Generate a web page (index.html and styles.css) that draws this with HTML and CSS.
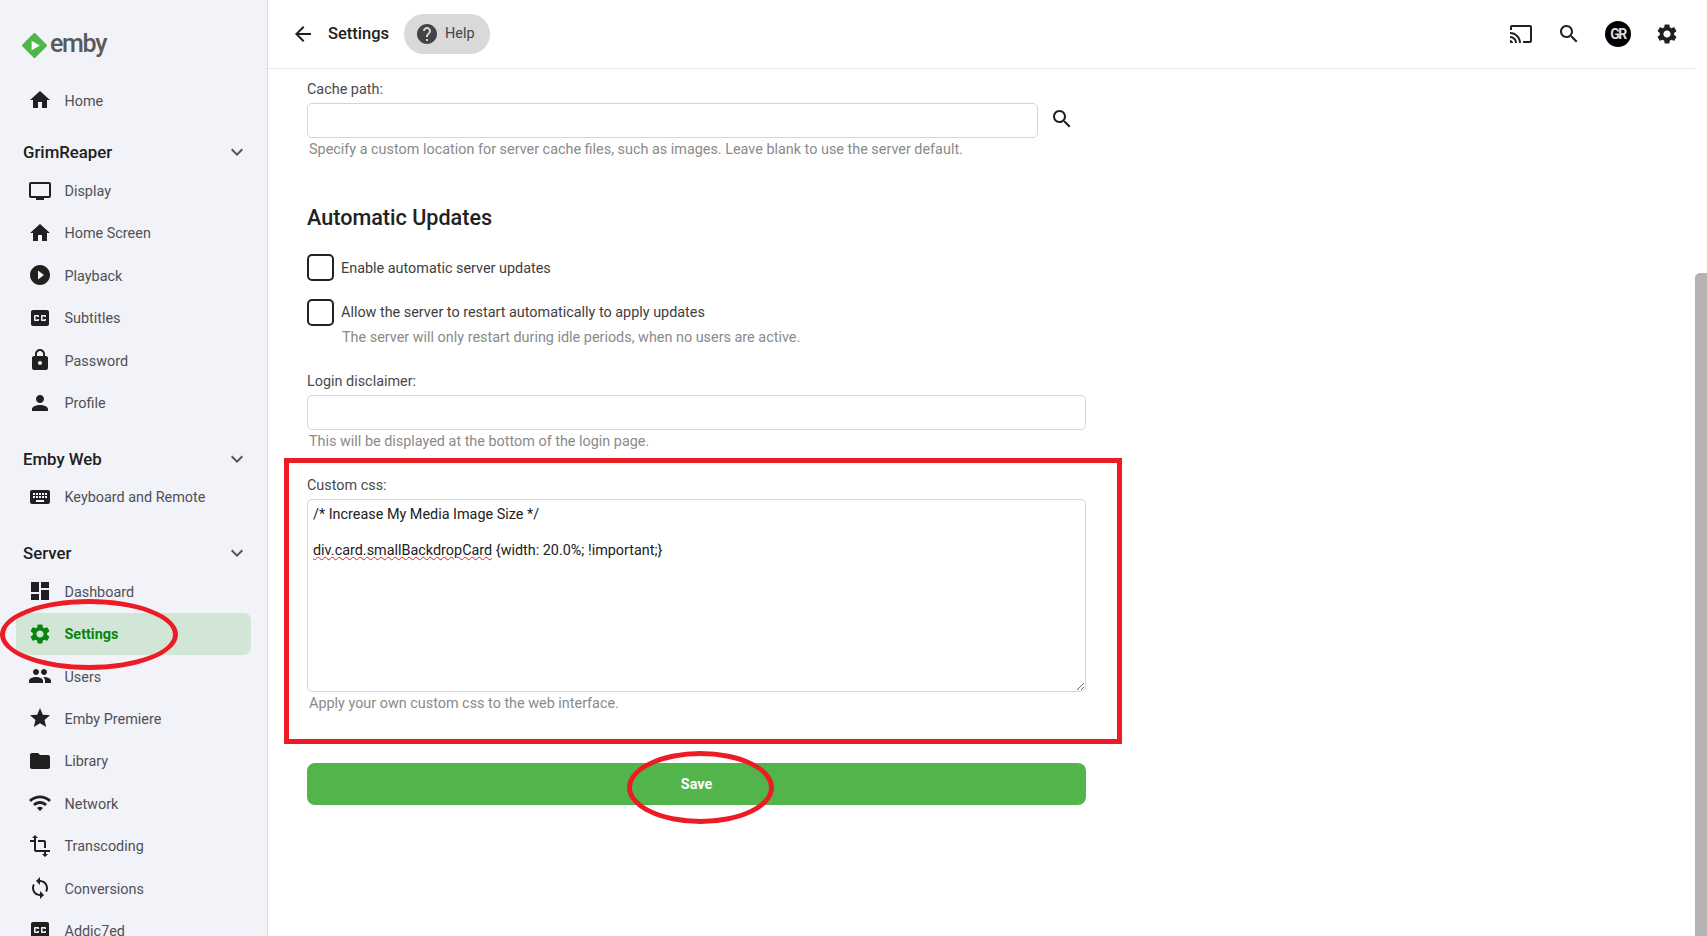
FILE: index.html
```html
<!DOCTYPE html>
<html lang="en">
<head>
<meta charset="utf-8">
<title>Settings</title>
<link rel="stylesheet" href="styles.css">
</head>
<body>
<svg class="sprite" aria-hidden="true">
<symbol id="i-home" viewBox="0 0 24 24"><path d="M10 20v-6h4v6h5v-8h3L12 3 2 12h3v8z"/></symbol>
<symbol id="i-tv" viewBox="0 0 24 24"><path d="M21 3H3c-1.1 0-2 .9-2 2v12c0 1.1.9 2 2 2h5v2h8v-2h5c1.1 0 1.99-.9 1.99-2L23 5c0-1.1-.9-2-2-2zm0 14H3V5h18v12z"/></symbol>
<symbol id="i-play" viewBox="0 0 24 24"><path d="M12 2C6.48 2 2 6.48 2 12s4.48 10 10 10 10-4.48 10-10S17.52 2 12 2zm-2 14.5v-9l6 4.5-6 4.5z"/></symbol>
<symbol id="i-cc" viewBox="0 0 24 24"><path d="M19 4H5c-1.11 0-2 .9-2 2v12c0 1.1.89 2 2 2h14c1.1 0 2-.9 2-2V6c0-1.1-.9-2-2-2zm-8 7H9.5v-.5h-2v3h2V13H11v1c0 .55-.45 1-1 1H7c-.55 0-1-.45-1-1v-4c0-.55.45-1 1-1h3c.55 0 1 .45 1 1v1zm7 0h-1.5v-.5h-2v3h2V13H18v1c0 .55-.45 1-1 1h-3c-.55 0-1-.45-1-1v-4c0-.55.45-1 1-1h3c.55 0 1 .45 1 1v1z"/></symbol>
<symbol id="i-lock" viewBox="0 0 24 24"><path d="M18 8h-1V6c0-2.76-2.24-5-5-5S7 3.24 7 6v2H6c-1.1 0-2 .9-2 2v10c0 1.1.9 2 2 2h12c1.1 0 2-.9 2-2V10c0-1.1-.9-2-2-2zm-6 9c-1.1 0-2-.9-2-2s.9-2 2-2 2 .9 2 2-.9 2-2 2zm3.1-9H8.9V6c0-1.71 1.39-3.1 3.1-3.1 1.71 0 3.1 1.39 3.1 3.1v2z"/></symbol>
<symbol id="i-person" viewBox="0 0 24 24"><path d="M12 12c2.21 0 4-1.79 4-4s-1.79-4-4-4-4 1.79-4 4 1.79 4 4 4zm0 2c-2.67 0-8 1.34-8 4v2h16v-2c0-2.66-5.33-4-8-4z"/></symbol>
<symbol id="i-keyboard" viewBox="0 0 24 24"><path d="M20 5H4c-1.1 0-1.99.9-1.99 2L2 17c0 1.1.9 2 2 2h16c1.1 0 2-.9 2-2V7c0-1.1-.9-2-2-2zm-9 3h2v2h-2V8zm0 3h2v2h-2v-2zM8 8h2v2H8V8zm0 3h2v2H8v-2zm-1 2H5v-2h2v2zm0-3H5V8h2v2zm9 7H8v-2h8v2zm0-4h-2v-2h2v2zm0-3h-2V8h2v2zm3 3h-2v-2h2v2zm0-3h-2V8h2v2z"/></symbol>
<symbol id="i-dashboard" viewBox="0 0 24 24"><path d="M3 13h8V3H3v10zm0 8h8v-6H3v6zm10 0h8V11h-8v10zm0-18v6h8V3h-8z"/></symbol>
<symbol id="i-gear" viewBox="0 0 24 24"><path d="M19.14 12.94c.04-.3.06-.61.06-.94 0-.32-.02-.64-.07-.94l2.03-1.58c.18-.14.23-.41.12-.61l-1.92-3.32c-.12-.22-.37-.29-.59-.22l-2.39.96c-.5-.38-1.03-.7-1.62-.94l-.36-2.54c-.04-.24-.24-.41-.48-.41h-3.84c-.24 0-.43.17-.47.41l-.36 2.54c-.59.24-1.13.57-1.62.94l-2.39-.96c-.22-.08-.47 0-.59.22L2.74 8.87c-.12.21-.08.47.12.61l2.03 1.58c-.05.3-.09.63-.09.94s.02.64.07.94l-2.03 1.58c-.18.14-.23.41-.12.61l1.92 3.32c.12.22.37.29.59.22l2.39-.96c.5.38 1.03.7 1.62.94l.36 2.54c.05.24.24.41.48.41h3.84c.24 0 .44-.17.47-.41l.36-2.54c.59-.24 1.13-.56 1.62-.94l2.39.96c.22.08.47 0 .59-.22l1.92-3.32c.12-.22.07-.47-.12-.61l-2.01-1.58zM12 15.6c-1.98 0-3.6-1.62-3.6-3.6s1.62-3.6 3.6-3.6 3.6 1.62 3.6 3.6-1.62 3.6-3.6 3.6z"/></symbol>
<symbol id="i-people" viewBox="0 0 24 24"><path d="M16 11c1.66 0 2.99-1.34 2.99-3S17.66 5 16 5c-1.66 0-3 1.34-3 3s1.34 3 3 3zm-8 0c1.66 0 2.99-1.34 2.99-3S9.66 5 8 5C6.34 5 5 6.34 5 8s1.34 3 3 3zm0 2c-2.33 0-7 1.17-7 3.5V19h14v-2.5c0-2.33-4.67-3.5-7-3.5zm8 0c-.29 0-.62.02-.97.05 1.16.84 1.97 1.97 1.97 3.45V19h6v-2.5c0-2.33-4.67-3.5-7-3.5z"/></symbol>
<symbol id="i-star" viewBox="0 0 24 24"><path d="M12 17.27L18.18 21l-1.64-7.03L22 9.24l-7.19-.61L12 2 9.19 8.63 2 9.24l5.46 4.73L5.82 21z"/></symbol>
<symbol id="i-folder" viewBox="0 0 24 24"><path d="M10 4H4c-1.1 0-1.99.9-1.99 2L2 18c0 1.1.9 2 2 2h16c1.1 0 2-.9 2-2V8c0-1.1-.9-2-2-2h-8l-2-2z"/></symbol>
<symbol id="i-wifi" viewBox="0 0 24 24"><path d="M1 9l2 2c4.97-4.97 13.03-4.97 18 0l2-2C16.93 2.93 7.08 2.93 1 9zm8 8l3 3 3-3c-1.65-1.66-4.34-1.66-6 0zm-4-4l2 2c2.76-2.76 7.24-2.76 10 0l2-2C15.14 9.14 8.87 9.14 5 13z"/></symbol>
<symbol id="i-transform" viewBox="0 0 24 24"><path d="M22 18v-2H8V4h2L7 1 4 4h2v2H2v2h4v8c0 1.1.9 2 2 2h8v2h-2l3 3 3-3h-2v-2h4zM10 8h6v6h2V8c0-1.1-.9-2-2-2h-6v2z"/></symbol>
<symbol id="i-sync" viewBox="0 0 24 24"><path d="M12 4V1L8 5l4 4V6c3.31 0 6 2.69 6 6 0 1.01-.25 1.97-.7 2.8l1.46 1.46C19.54 15.03 20 13.57 20 12c0-4.42-3.58-8-8-8zm0 14c-3.31 0-6-2.69-6-6 0-1.01.25-1.97.7-2.8L5.24 7.74C4.46 8.97 4 10.43 4 12c0 4.42 3.58 8 8 8v3l4-4-4-4v3z"/></symbol>
<symbol id="i-chevron" viewBox="0 0 24 24"><path d="M7.41 8.59L12 13.17l4.59-4.58L18 10l-6 6-6-6z"/></symbol>
<symbol id="i-back" viewBox="0 0 24 24"><path d="M20 11H7.83l5.59-5.59L12 4l-8 8 8 8 1.41-1.41L7.83 13H20v-2z"/></symbol>
<symbol id="i-help" viewBox="0 0 24 24"><path d="M12 2C6.48 2 2 6.48 2 12s4.48 10 10 10 10-4.48 10-10S17.52 2 12 2zm1 17h-2v-2h2v2zm2.07-7.75l-.9.92C13.45 12.9 13 13.5 13 15h-2v-.5c0-1.1.45-2.1 1.17-2.83l1.24-1.26c.37-.36.59-.86.59-1.41 0-1.1-.9-2-2-2s-2 .9-2 2H8c0-2.21 1.79-4 4-4s4 1.79 4 4c0 .88-.36 1.68-.93 2.25z"/></symbol>
<symbol id="i-cast" viewBox="0 0 24 24"><path d="M21 3H3c-1.1 0-2 .9-2 2v3h2V5h18v14h-7v2h7c1.1 0 2-.9 2-2V5c0-1.1-.9-2-2-2zM1 18v3h3c0-1.66-1.34-3-3-3zm0-4v2c2.76 0 5 2.24 5 5h2c0-3.87-3.13-7-7-7zm0-4v2c4.97 0 9 4.03 9 9h2c0-6.08-4.93-11-11-11z"/></symbol>
<symbol id="i-search" viewBox="0 0 24 24"><path d="M15.5 14h-.79l-.28-.27C15.41 12.59 16 11.11 16 9.5 16 5.91 13.09 3 9.5 3S3 5.91 3 9.5 5.91 16 9.5 16c1.61 0 3.09-.59 4.23-1.57l.27.28v.79l5 4.99L20.49 19l-4.99-5zm-6 0C7.01 14 5 11.99 5 9.5S7.01 5 9.5 5 14 7.01 14 9.5 11.99 14 9.5 14z"/></symbol>
</svg>

<div class="app">
  <nav class="sidebar">
    <div class="logo">
      <svg class="logo-mark" viewBox="0 0 26 26"><path class="logo-green" d="M13 0.5 L25.5 13 L13 25.5 L0.5 13 Z"/><path class="logo-white" d="M10 8 L18.5 13 L10 18 Z"/></svg>
      <span class="logo-text">emby</span>
    </div>
    <a class="item home-item"><svg class="icon"><use href="#i-home"/></svg><span>Home</span></a>

    <div class="section grim"><span>GrimReaper</span><svg class="chev"><use href="#i-chevron"/></svg></div>
    <a class="item"><svg class="icon"><use href="#i-tv"/></svg><span>Display</span></a>
    <a class="item"><svg class="icon"><use href="#i-home"/></svg><span>Home Screen</span></a>
    <a class="item"><svg class="icon"><use href="#i-play"/></svg><span>Playback</span></a>
    <a class="item"><svg class="icon"><use href="#i-cc"/></svg><span>Subtitles</span></a>
    <a class="item"><svg class="icon"><use href="#i-lock"/></svg><span>Password</span></a>
    <a class="item"><svg class="icon"><use href="#i-person"/></svg><span>Profile</span></a>

    <div class="section"><span>Emby Web</span><svg class="chev"><use href="#i-chevron"/></svg></div>
    <a class="item"><svg class="icon"><use href="#i-keyboard"/></svg><span>Keyboard and Remote</span></a>

    <div class="section"><span>Server</span><svg class="chev"><use href="#i-chevron"/></svg></div>
    <a class="item"><svg class="icon"><use href="#i-dashboard"/></svg><span>Dashboard</span></a>
    <a class="item active"><svg class="icon"><use href="#i-gear"/></svg><span>Settings</span></a>
    <a class="item"><svg class="icon"><use href="#i-people"/></svg><span>Users</span></a>
    <a class="item"><svg class="icon"><use href="#i-star"/></svg><span>Emby Premiere</span></a>
    <a class="item"><svg class="icon"><use href="#i-folder"/></svg><span>Library</span></a>
    <a class="item"><svg class="icon"><use href="#i-wifi"/></svg><span>Network</span></a>
    <a class="item"><svg class="icon"><use href="#i-transform"/></svg><span>Transcoding</span></a>
    <a class="item"><svg class="icon"><use href="#i-sync"/></svg><span>Conversions</span></a>
    <a class="item"><svg class="icon"><use href="#i-cc"/></svg><span>Addic7ed</span></a>
  </nav>

  <div class="main">
    <header class="topbar">
      <svg class="icon back"><use href="#i-back"/></svg>
      <h1 class="title">Settings</h1>
      <div class="help-pill"><svg class="icon help-icon"><use href="#i-help"/></svg><span class="help-text">Help</span></div>
      <div class="top-actions">
        <svg class="icon"><use href="#i-cast"/></svg>
        <svg class="icon"><use href="#i-search"/></svg>
        <div class="avatar">GR</div>
        <svg class="icon"><use href="#i-gear"/></svg>
      </div>
    </header>

    <form class="content">
      <label class="field-label">Cache path:</label>
      <div class="path-row">
        <div class="input path-input"></div>
        <svg class="icon path-search"><use href="#i-search"/></svg>
      </div>
      <p class="hint">Specify a custom location for server cache files, such as images. Leave blank to use the server default.</p>

      <h2 class="heading">Automatic Updates</h2>

      <div class="check-row first"><span class="box"></span><span class="check-text">Enable automatic server updates</span></div>
      <div class="check-row second"><span class="box"></span><span class="check-text">Allow the server to restart automatically to apply updates</span></div>
      <p class="hint sub">The server will only restart during idle periods, when no users are active.</p>

      <label class="field-label login">Login disclaimer:</label>
      <div class="input"></div>
      <p class="hint">This will be displayed at the bottom of the login page.</p>

      <label class="field-label custom">Custom css:</label>
      <div class="textarea">
        <div>/* Increase My Media Image Size */</div>
        <div class="blank"></div>
        <div><span class="misspelt">div.card.smallBackdropCard</span> {width: 20.0%; !important;}</div>
      </div>
      <p class="hint">Apply your own custom css to the web interface.</p>

      <button class="save" type="button">Save</button>
    </form>
  </div>

  <div class="scrollbar"><div class="thumb"></div></div>
</div>

<div class="mark mark-box"></div>
<div class="mark mark-settings"></div>
<div class="mark mark-save"></div>
</body>
</html>
```
FILE: styles.css
```css
* { box-sizing: border-box; }
html, body { margin: 0; height: 100%; overflow: hidden; background: #fff; }
body { font-family: Roboto, "Liberation Sans", sans-serif; color: #222; position: relative; }
.sprite { display: none; }
.app { display: flex; height: 936px; }

/* sidebar */
.sidebar { width: 268px; flex: none; height: 936px; overflow: hidden; background: #f2f2f9; border-right: 1px solid #dcdce4; padding-top: 30px; }
.logo { display: flex; align-items: center; height: 30px; padding-left: 22px; gap: 3px; margin-bottom: 19px; }
.logo-mark { width: 25px; height: 25px; flex: none; }
.logo-green { fill: #52b54b; stroke: #52b54b; stroke-width: 1.5; stroke-linejoin: round; }
.logo-white { fill: #fff; }
.logo-text { font-family: Roboto, sans-serif; font-size: 25px; font-weight: 500; color: #5a5a5a; letter-spacing: -1.3px; line-height: 30px; position: relative; top: -1px; }
.item { display: flex; align-items: center; height: 42.4px; margin: 0 16px 0 16px; padding-left: 12px; gap: 12.5px; font-size: 14.4px; color: #505055; border-radius: 7px; }
.item span { padding-top: 2px; }
.icon { width: 24px; height: 24px; flex: none; fill: #202020; }
.item.active { background: #d2e6d7; color: #0a830f; font-weight: 700; }
.item.active .icon { fill: #0a830f; }
.section { display: flex; align-items: center; justify-content: space-between; height: 30px; margin-top: 20px; padding: 0 18px 0 23px; font-size: 16.8px; font-weight: 500; color: #202020; margin-bottom: 2px; }
.section.grim { margin-top: 16px; margin-bottom: 2px; }
.chev { width: 24px; height: 24px; fill: #555; }

/* top bar */
.main { flex: 1; min-width: 0; display: flex; flex-direction: column; }
.topbar { height: 69px; flex: none; border-bottom: 1px solid #e8e8e8; display: flex; align-items: center; padding-left: 23px; padding-right: 16px; }
.title { margin: 0 0 0 13px; padding-bottom: 1px; font-size: 16.5px; font-weight: 500; color: #222; }
.help-pill { display: flex; align-items: center; height: 40px; margin-left: 15px; padding: 0 15px 0 11px; background: #d9d9d9; border-radius: 20px; gap: 6px; font-size: 14.4px; color: #444; }
.help-text { padding-bottom: 1px; }
.help-icon { fill: #444; }
.top-actions { margin-left: auto; display: flex; align-items: center; gap: 24px; }
.avatar { width: 26px; height: 26px; border-radius: 50%; background: #000; color: #ddd; font-size: 14px; font-weight: 700; display: flex; align-items: center; justify-content: center; letter-spacing: -1.5px; }

/* form */
.content { display: block; padding: 10px 0 0 39px; width: 818px; }
.field-label { display: block; font-size: 14.4px; line-height: 22px; color: #4a4a4a; margin-bottom: 2px; }
.input { height: 35px; border: 1px solid #d5d5d5; border-radius: 5px; background: #fff; }
.path-row { display: flex; align-items: center; }
.path-input { width: 731px; flex: none; }
.path-search { margin-left: 12px; margin-bottom: 4px; }
.hint { margin: 1px 0 -2px 2px; font-size: 14.4px; line-height: 22px; color: #8a8a8a; }
.heading { margin: 44px 0 -2px; font-size: 21.6px; line-height: 30px; font-weight: 500; color: #222; }
.check-row { display: flex; align-items: center; gap: 7px; font-size: 14.4px; color: #404040; height: 27px; }
.check-row.first { margin-top: 23px; }
.check-row.second { margin-top: 18px; }
.check-text { padding-top: 2px; }
.second .check-text { padding-top: 0; }
.box { width: 27px; height: 27px; border: 2px solid #222; border-radius: 5px; flex: none; }
.hint.sub { margin: 1px 0 -2px 35px; }
.field-label.login { margin-top: 24px; }
.field-label.custom { margin-top: 24px; }
.textarea { height: 193px; border: 1px solid #d5d5d5; border-radius: 5px; padding: 6px 5px 4px; font-size: 14.4px; line-height: 18px; color: #222; overflow: auto; resize: vertical; }
.blank { height: 18px; }
.misspelt { text-decoration: underline wavy #e02020 1px; text-underline-offset: 1px; }
.save { display: block; width: 100%; height: 42px; margin-top: 50px; border: 0; border-radius: 8px; background: #52b54b; color: #fff; font-family: inherit; font-size: 14.4px; font-weight: 700; }

/* scrollbar */
.scrollbar { width: 12px; flex: none; background: #fff; padding-top: 273px; }
.thumb { height: 663px; background: #b3b3b3; border-radius: 5px 0 0 0; }

/* red annotations drawn over the screenshot */
.mark { position: absolute; border: 5px solid #ed1c24; pointer-events: none; }
.mark-box { left: 284px; top: 458px; width: 838px; height: 286px; }
.mark-settings { left: 0; top: 599px; width: 178px; height: 71px; border-radius: 50%; }
.mark-save { left: 627px; top: 751px; width: 147px; height: 73px; border-radius: 50%; }
```
